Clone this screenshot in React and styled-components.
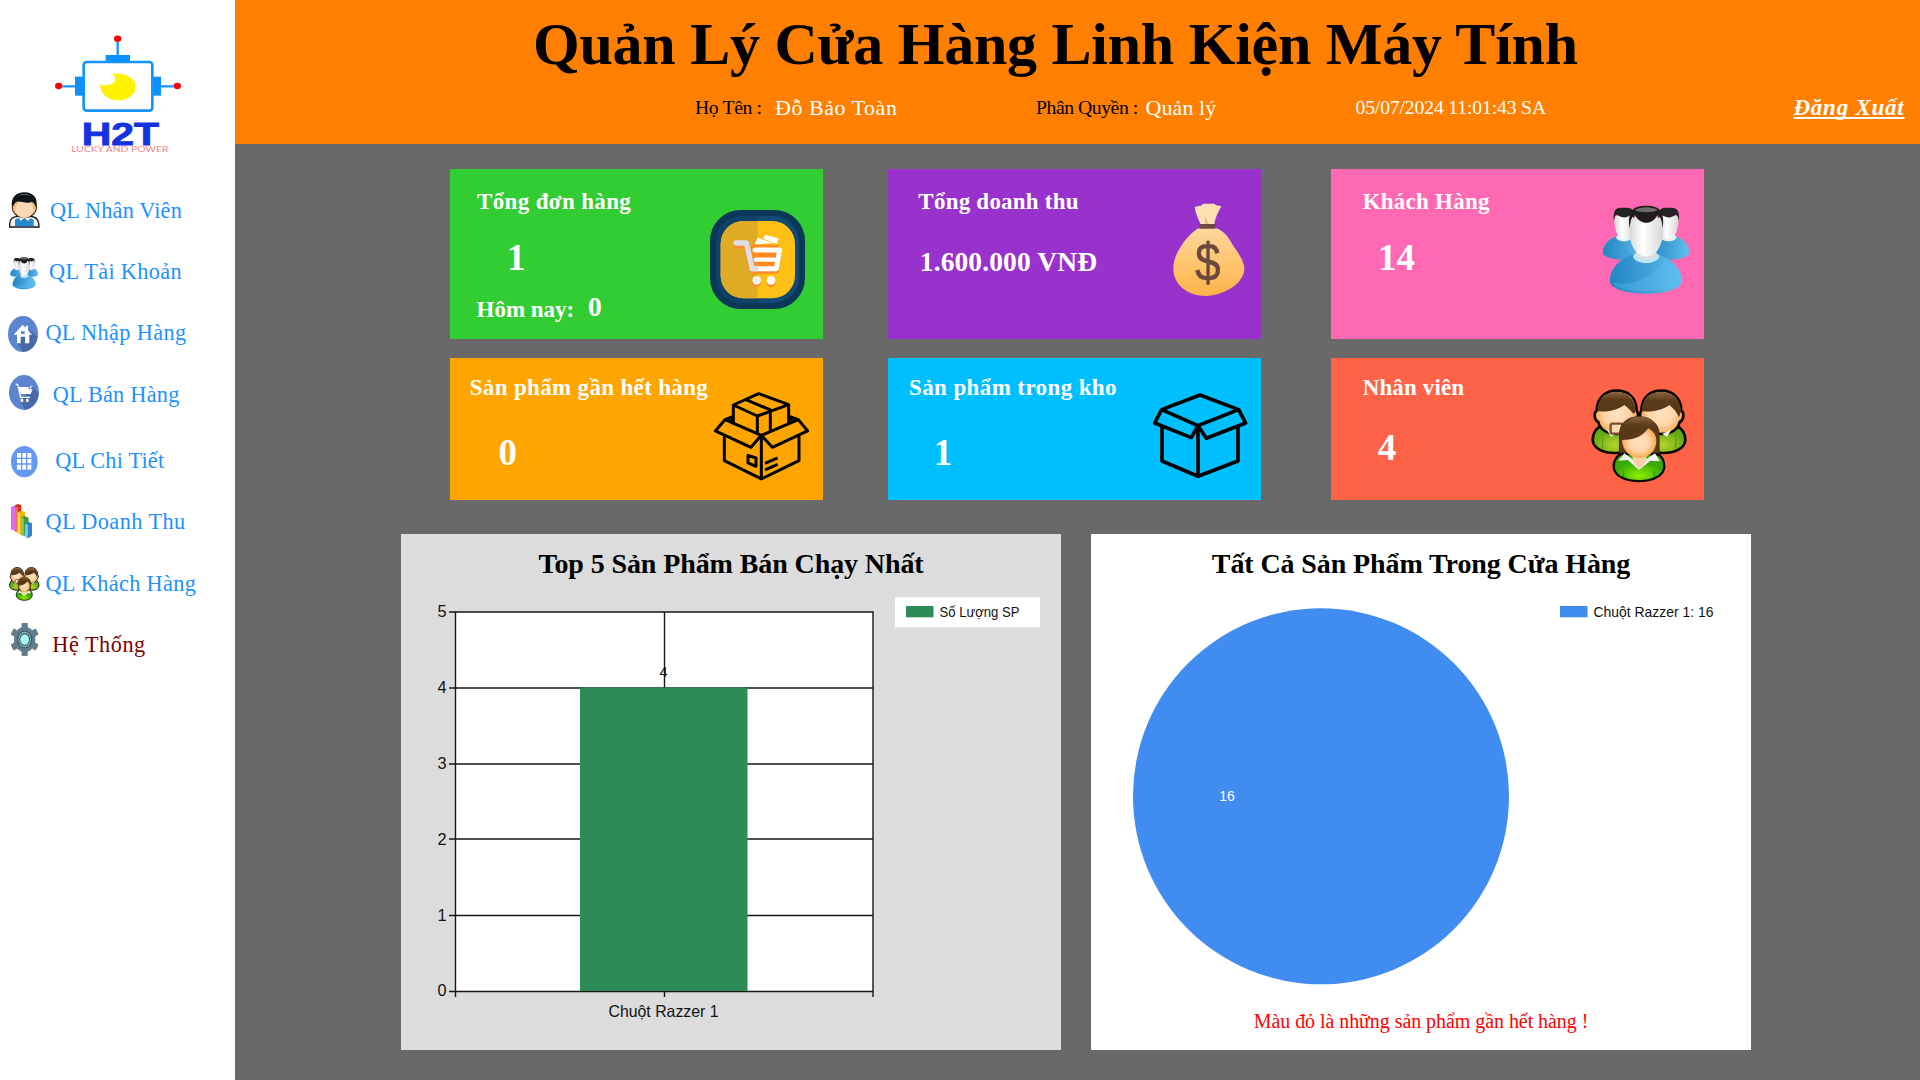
import React from 'react';
import styled, { createGlobalStyle } from 'styled-components';

const GlobalStyle = createGlobalStyle`
  * { box-sizing: border-box; }
  body {
    margin: 0;
    background: #696969;
    font-family: "Liberation Serif", "Times New Roman", serif;
    overflow: hidden;
  }
`;

const Screen = styled.div`
  display: flex;
  width: 1920px;
  height: 1080px;
`;

/* ---------- sidebar ---------- */

const Sidebar = styled.aside`
  width: 235px;
  flex: none;
  background: #fff;
  display: flex;
  flex-direction: column;
`;

const LogoBox = styled.div`
  height: 180px;
  padding: 35px 0 0 54.5px;
`;

const Nav = styled.nav`
  display: flex;
  flex-direction: column;
`;

const NavItem = styled.a`
  display: flex;
  align-items: center;
  height: 61.33px;
  margin-top: ${(p) => p.$gap || 0}px;
  color: ${(p) => p.$color || '#1e90ff'};
  font-size: 22.3px;
  line-height: 28px;
  letter-spacing: ${(p) => p.$spacing}px;
  white-space: nowrap;
`;

const NavIcon = styled.span`
  display: flex;
  flex: none;
  width: ${(p) => p.$width}px;
  padding-left: ${(p) => p.$left}px;
  padding-top: ${(p) => p.$drop || 0}px;
  padding-bottom: ${(p) => p.$lift || 0}px;
`;

/* ---------- header ---------- */

const Main = styled.main`
  flex: 1;
  min-width: 0;
  background: #696969;
`;

const Header = styled.header`
  height: 144px;
  padding-top: 9px;
  background: #ff8000;
`;

const Title = styled.h1`
  margin: 0 0 13px;
  padding-left: 298px;
  font-size: 60px;
  line-height: 71px;
  letter-spacing: -0.25px;
  color: #000;
  white-space: nowrap;
`;

const InfoRow = styled.div`
  display: grid;
  grid-template-columns: 80px 261px 109.5px 210px 438px auto;
  padding-left: 460px;
  line-height: 28px;
  white-space: nowrap;
`;

const InfoLabel = styled.span`
  font-size: 19.7px;
  letter-spacing: ${(p) => p.$spacing}px;
  color: ${(p) => p.$color || '#000'};
`;

const InfoValue = styled.span`
  padding-top: 1px;
  font-size: 22px;
  letter-spacing: ${(p) => p.$spacing}px;
  color: #fff;
`;

const Logout = styled.a`
  padding-top: 1px;
  justify-self: start;
  font-size: 23px;
  font-style: italic;
  font-weight: bold;
  letter-spacing: 0.75px;
  color: #fff;
  text-decoration: underline;
  text-decoration-thickness: 2px;
  text-decoration-skip-ink: none;
  text-underline-offset: 2px;
`;

/* ---------- cards ---------- */

const Cards = styled.section`
  display: grid;
  grid-template-columns: 438.33px 442.67px 373px;
  grid-template-rows: 170px 142px;
  row-gap: 19px;
  padding: 25px 0 0 215px;
`;

const Card = styled.article`
  display: flex;
  justify-content: space-between;
  width: 373px;
  background: ${(p) => p.$color};
  color: #fff;
  font-weight: bold;
  white-space: nowrap;
`;

const CardBody = styled.div`
  display: flex;
  flex-direction: column;
  padding-top: ${(p) => p.$top}px;
`;

const CardTitle = styled.div`
  padding-left: ${(p) => p.$left}px;
  font-size: 23px;
  line-height: 28px;
  letter-spacing: ${(p) => p.$spacing}px;
`;

const CardValue = styled.div`
  margin-top: ${(p) => p.$gap}px;
  padding-left: ${(p) => p.$left}px;
  font-size: ${(p) => (p.$small ? 27.5 : 37)}px;
  line-height: ${(p) => (p.$small ? 30 : 44)}px;
  letter-spacing: ${(p) => (p.$small ? 0.1 : 0)}px;
`;

const CardFoot = styled.div`
  display: flex;
  margin-top: 12px;
`;

const FootLabel = styled.div`
  width: 138px;
  padding: 4px 0 0 26.5px;
  font-size: 23px;
  line-height: 28px;
`;

const FootValue = styled.div`
  font-size: 27.5px;
  line-height: 30px;
`;

const CardArt = styled.div`
  flex: none;
  padding: ${(p) => p.$top}px ${(p) => p.$right}px 0 0;
`;

/* ---------- charts ---------- */

const Charts = styled.section`
  display: flex;
  gap: 30px;
  padding: 34px 0 0 166px;
`;

const Panel = styled.article`
  width: 660px;
  height: 516px;
  padding-top: 13px;
  background: ${(p) => p.$color};
`;

const PanelTitle = styled.h2`
  margin: 0;
  font-size: 28px;
  line-height: 34px;
  letter-spacing: -0.1px;
  text-align: center;
  color: #000;
`;

const Note = styled.p`
  margin: 0;
  font-size: 20px;
  line-height: 28px;
  letter-spacing: -0.06px;
  text-align: center;
  color: #f00;
`;

const Drawing = styled.svg`
  display: block;
  overflow: visible;
`;

const ChartText = styled.text`
  font-family: "Liberation Sans", Arial, sans-serif;
  fill: ${(p) => p.$color || '#111'};
`;

/* ---------- drawings ---------- */

const Art = ({ box, w, h, children }) => (
  <Drawing width={w} height={h} viewBox={box} preserveAspectRatio="none">{children}</Drawing>
);

const Logo = () => (
  <Art box="164 105 378 357" w={126} h={119}>
    <g stroke="#1493ff" strokeWidth="7">
      <path d="M352 120V170M186 259H228M480 259H520" />
    </g>
    <g fill="#0a90ff">
      <rect x="316" y="165" width="73" height="22" />
      <rect x="224" y="230" width="26" height="57" />
      <rect x="456" y="230" width="26" height="57" />
    </g>
    <rect x="250" y="186" width="206" height="146" rx="9" fill="#fff" stroke="#1493ff" strokeWidth="8" />
    <ellipse cx="352" cy="116" rx="11" ry="9.500" fill="#fb0007" />
    <ellipse cx="175" cy="258" rx="11" ry="9.500" fill="#fb0007" />
    <ellipse cx="531" cy="258" rx="11" ry="9.500" fill="#fb0007" />
    <path d="M335 222C370 215 406 232 406 260C406 284 382 301 353 301C324 301 298 282 300 251C310 259 332 256 341 247C348 239 346 229 335 222Z" fill="#fff200" />
    <text x="244" y="435" fontFamily="Liberation Sans" fontWeight="bold" fontSize="94" fill="#1433e0" stroke="#1433e0" strokeWidth="2.5" textLength="232" lengthAdjust="spacingAndGlyphs">H2T</text>
    <text x="213" y="457" fontFamily="Lato" fontSize="25" fill="#f08585" textLength="291" lengthAdjust="spacingAndGlyphs">LUCKY AND POWER</text>
  </Art>
);

const Employee = () => (
  <Art box="26 37 92 107" w={30.7} h={35.7}>
    <path d="M28 142C27 118 36 110 54 110H90C108 110 116 119 116 142Z" fill="#eef3f8" stroke="#151515" strokeWidth="4" />
    <path d="M44 140V121C52 112 92 112 100 121V140Z" fill="#2589cf" />
    <path d="M54 110L60 124L72 116L85 124L91 110L72 100Z" fill="#fff" />
    <ellipse cx="72" cy="84" rx="36" ry="30" fill="#f5b878" stroke="#2a211a" strokeWidth="3" />
    <ellipse cx="72" cy="89" rx="27" ry="26" fill="#fcd9b2" />
    <path d="M35 84C30 52 48 38 72 38C98 38 114 54 108 84C103 74 102 70 94 66C80 74 60 64 50 66C42 70 40 76 35 84Z" fill="#111417" />
    <path d="M52 48C62 41 84 41 93 49C80 46 64 45 52 48Z" fill="#5b6166" />
  </Art>
);

const Customers = ({ w, h }) => (
  <Art box="846 133 266 269" w={w} h={h}>
    <defs>
      <linearGradient id="shirt" x1="0" x2="1">
        <stop offset="0" stopColor="#1f86c4" />
        <stop offset="0.5" stopColor="#429fd6" />
        <stop offset="1" stopColor="#63c0f2" />
      </linearGradient>
      <linearGradient id="face" x1="0" x2="1">
        <stop offset="0" stopColor="#d6d6d6" />
        <stop offset="0.4" stopColor="#ffffff" />
        <stop offset="1" stopColor="#d6d6d6" />
      </linearGradient>
    </defs>
    {[0, 134].map((dx) => (
      <g key={dx} transform={`translate(${dx})`}>
        <path
          d="M848 277C850 244 878 224 912 224C947 224 974 248 975 277C968 304 856 304 848 277Z"
          fill="url(#shirt)"
        />
        <path d="M888 230C892 246 932 246 936 230L928 220H896Z" fill="#e6eef2" />
        <path d="M883 165C880 210 897 236 912 236C928 236 944 208 941 165Z" fill="url(#face)" />
        <path d="M882 182C876 135 900 142 912 141C925 142 948 136 942 182C941 168 936 160 931 163C920 173 904 172 893 163C887 160 884 168 882 182Z" fill="#242222" />
      </g>
    ))}
    <path d="M869 360C872 310 920 276 978 276C1036 276 1084 314 1086 360C1084 412 872 412 869 360Z" fill="url(#shirt)" />
    <path d="M880 366C930 380 1000 350 1034 297C1064 312 1080 336 1081 362C1068 402 886 400 880 366Z" fill="#5dbcf0" opacity="0.35" />
    <path d="M939 286C942 314 1014 314 1019 286L1004 272H952Z" fill="#bfe4f4" />
    <path d="M948 270C944 303 1012 304 1009 270Z" fill="#dedede" />
    <path d="M929 180C922 242 942 287 978 287C1015 287 1036 240 1028 180C1015 160 940 160 929 180Z" fill="url(#face)" />
    <path d="M929 203C921 148 942 135 978 135C1015 135 1036 148 1028 203C1026 176 1018 160 1010 166C998 193 960 193 947 166C939 160 931 176 929 203Z" fill="#1f1c1c" />
    <path d="M944 148C962 137 996 137 1013 148C1000 157 958 157 944 148Z" fill="#6e6a68" />
  </Art>
);

const Staff = ({ w, h }) => (
  <Art box="812 685 288 282" w={w} h={h}>
    <defs>
      <radialGradient id="skin">
        <stop offset="0" stopColor="#fee3c4" />
        <stop offset="0.6" stopColor="#fdd5a8" />
        <stop offset="1" stopColor="#f9a850" />
      </radialGradient>
      <radialGradient id="green" cy="0.7">
        <stop offset="0" stopColor="#b8d42c" />
        <stop offset="1" stopColor="#64a814" />
      </radialGradient>
      <radialGradient id="lime" cy="0.8">
        <stop offset="0" stopColor="#8cf000" />
        <stop offset="1" stopColor="#38a808" />
      </radialGradient>
      <linearGradient id="hair" x2="0" y2="1">
        <stop offset="0" stopColor="#8a6440" />
        <stop offset="0.35" stopColor="#5c3b1a" />
        <stop offset="1" stopColor="#573616" />
      </linearGradient>
    </defs>
    {['', 'translate(1912) scale(-1 1)'].map((flip) => (
      <g key={flip} transform={flip} stroke="#0a0a05" strokeWidth="8">
        <path d="M817 838C818 810 834 797 850 795H924C944 799 950 818 950 838C949 888 820 892 817 838Z" fill="url(#green)" />
        <path d="M829 750C819 756 822 780 834 784C838 806 860 820 888 820C918 820 940 800 944 784C956 776 954 756 949 750C948 708 922 690 888 690C854 690 830 712 829 750Z" fill="url(#skin)" />
      </g>
    ))}
    <path d="M832 752C830 714 856 694 888 694C922 694 944 714 946 752L940 760C932 752 926 744 912 733C888 750 860 754 832 752Z" fill="url(#hair)" />
    <path d="M965 752C964 714 990 694 1023 694C1056 694 1080 714 1082 752L1076 770C1070 754 1060 744 1047 733C1024 750 994 754 965 752Z" fill="url(#hair)" />
    <path d="M858 806L872 828L886 820ZM1054 806L1040 828L1026 820Z" fill="#f4f4f4" />
    <path d="M847 828V866M1066 828V866" stroke="#5c9614" strokeWidth="3" />
    <rect x="871" y="789" width="36" height="30" rx="5" fill="#f9dcae" stroke="#7c4b30" strokeWidth="7" />
    <path d="M898 884V820C898 786 924 768 956 768C990 768 1016 790 1016 820V884C1004 890 914 890 898 884Z" fill="#5c3c18" stroke="#3a2810" strokeWidth="3" />
    <path d="M880 918C880 896 892 882 906 880H1006C1022 882 1032 896 1032 918C1030 976 882 976 880 918Z" fill="url(#lime)" stroke="#0a0a05" strokeWidth="7" />
    <path d="M910 930V950M1002 930V950" stroke="#2f9808" strokeWidth="4" />
    <path d="M894 900L912 878L956 910L1004 878L1019 902L990 900L956 928L922 898Z" fill="#f2f2f2" />
    <path d="M936 880H978V903L956 926L938 903Z" fill="#fbd0a2" />
    <path d="M905 836C905 806 930 796 956 796C984 796 1008 808 1008 840C1008 872 984 892 956 892C928 892 905 868 905 836Z" fill="url(#skin)" />
    <path d="M903 838C898 790 926 768 956 768C994 768 1014 790 1012 842C1006 822 1000 812 984 803C962 832 936 838 903 838Z" fill="url(#hair)" />
  </Art>
);

const OrdersArt = () => (
  <Art box="810 150 285 297" w={95} h={99}>
    <rect x="810" y="150" width="285" height="297" rx="92" fill="#0b3858" />
    <rect x="828" y="168" width="249" height="261" rx="78" fill="#114b74" />
    <path d="M953 168H906A78 78 0 0 0 828 246V351A78 78 0 0 0 906 429H953Z" fill="#0f4268" />
    <rect x="842" y="183" width="223" height="232" rx="68" fill="#ffc015" />
    <path d="M953 183H910A68 68 0 0 0 842 251V347A68 68 0 0 0 910 415H953Z" fill="#dfab24" />
    <path d="M940 254H1016L1006 330H936L932 262Z" fill="#ff8a1f" />
    <g fill="none" stroke="#fb8b28" strokeWidth="16" strokeLinecap="round" strokeLinejoin="round">
      <path d="M888 257H918L936 333H1008L1018 280" />
    </g>
    <circle cx="950" cy="368" r="13" fill="#fb8b28" />
    <circle cx="993" cy="368" r="13" fill="#fb8b28" />
    <path d="M944 252L953 233L1000 250ZM970 236L975 224L1016 235L1010 252Z" fill="#fff" />
    <g fill="none" stroke="#fff" strokeLinecap="round" strokeLinejoin="round">
      <path d="M945 270H1019L1009 326H936" strokeWidth="15" />
      <path d="M948 299H1003" strokeWidth="13" />
      <path d="M888 249H919L937 326H948" strokeWidth="16" stroke="#dedee4" />
    </g>
    <circle cx="950" cy="361" r="13" fill="#f2f2f4" />
    <circle cx="993" cy="361" r="13" fill="#fff" />
  </Art>
);

const BagArt = () => (
  <Art box="880 129 215 280" w={71.7} h={93.3}>
    <defs>
      <linearGradient id="bag" x2="0" y2="1">
        <stop offset="0" stopColor="#ffd79c" />
        <stop offset="1" stopColor="#ffb347" />
      </linearGradient>
    </defs>
    <path d="M958 204C930 218 881 275 881 325C881 380 930 408 978 408C1035 406 1094 370 1094 325C1094 300 1065 265 1050 240C1040 222 1025 210 1008 204Z" fill="url(#bag)" />
    <path d="M945 142C955 134 966 141 970 131H1005C1008 139 1016 134 1025 139C1013 160 1006 176 1004 193H963C955 175 947 160 945 142Z" fill="#ffe0b2" />
    <path d="M974 164L988 192H978Z" fill="#e3bd88" />
    <rect x="958" y="192" width="50" height="14" rx="3" fill="#6d4c41" />
    <text x="946" y="363" fontFamily="Liberation Sans" fontWeight="normal" fontSize="160" fill="#6a483c" stroke="#6a483c" strokeWidth="1.500" textLength="77" lengthAdjust="spacingAndGlyphs">$</text>
  </Art>
);

const PackedBoxArt = () => (
  <Art box="822 695 285 265" w={95} h={88.3}>
    <g fill="none" stroke="#000" strokeWidth="9" strokeLinejoin="round">
      <path d="M880 792V734L956 700L1046 733V792M880 734L952 767L1046 733M916 717L991 749V812M952 767V819" />
      <path d="M880 768L855 778L826 812L933 861L964 825L855 778M1048 768L1075 778L1103 812L997 861L964 825L1075 778" />
      <path d="M868 782L880 776M1060 782L1046 774" strokeWidth="7" />
      <path d="M853 826V901L964 956L1077 901V826M964 825V956" />
      <path d="M924 885L948 893V918L924 908ZM975 909L1013 893M975 929L1013 912" />
    </g>
  </Art>
);

const OpenBoxArt = () => (
  <Art box="820 700 283 256" w={94.3} h={85.3}>
    <g fill="none" stroke="#000" strokeWidth="11" strokeLinejoin="round">
      <path d="M846 750L961 706L1077 750L955 798Z" />
      <path d="M846 750L825 790L935 834L955 798L980 836L1098 790L1077 750" />
      <path d="M847 800V904L955 950L1075 904V800M955 798V950" />
    </g>
  </Art>
);

const ImportIcon = () => (
  <Art box="24 408 90 108" w={30} h={36}>
    <ellipse cx="69" cy="462" rx="45" ry="54" fill="#5c84d0" />
    <path d="M68 434L113 470C108 496 92 512 70 515L52 490Z" fill="#4a68a6" />
    <path d="M41 464L68 434L76 443V437H84V451L96 464H88V490H75V470H62V490H51V464Z" fill="#fff" />
    <rect x="63" y="454" width="11" height="8" fill="#5c84d0" />
  </Art>
);

const SaleIcon = () => (
  <Art box="27 585 90 105" w={30} h={35}>
    <ellipse cx="72" cy="637.500" rx="45" ry="52.500" fill="#5c84d0" />
    <path d="M98 622L116 640C113 664 96 686 76 689L60 664Z" fill="#4a68a6" />
    <path d="M56 621H86V628H98L92 642H62Z" fill="#fff" />
    <path d="M47 612L53 614L62 652H90" fill="none" stroke="#fff" strokeWidth="4" />
    <path d="M97 618C90 620 88 628 94 633" fill="none" stroke="#dbe4f6" strokeWidth="4" />
    <rect x="62" y="656" width="8" height="10" rx="3" fill="#fff" />
    <rect x="78" y="656" width="8" height="10" rx="3" fill="#fff" />
  </Art>
);

const DetailIcon = () => (
  <Art box="33 78 80 94" w={26.7} h={31.3}>
    <ellipse cx="73" cy="125" rx="40" ry="47" fill="#6399f3" />
    <rect x="51" y="99" width="43" height="50" fill="#fff" />
    <path d="M65 99V149M80 99V149M51 115H94M51 132H94" stroke="#6399f3" strokeWidth="4" />
  </Art>
);

const RevenueIcon = () => (
  <Art box="33 249 67 103" w={22.3} h={34.3}>
    <path d="M33 258L47 253V330L33 326Z" fill="#e26af0" />
    <path d="M45 253L53 249L64 252V330L45 332Z" fill="#d4331f" />
    <path d="M45 257L53 258V335L45 330Z" fill="#f2705a" />
    <path d="M53 274L64 269L75 273V342L53 338Z" fill="#f0b400" />
    <path d="M53 274L60 276V341L53 337Z" fill="#ffe24a" />
    <path d="M64 290L74 285L86 290V346L64 343Z" fill="#3d9c3a" />
    <path d="M64 290L71 293V345L64 341Z" fill="#8ed36a" />
    <path d="M75 308L84 302L96 306V344L84 352L75 347Z" fill="#2d84c6" />
    <path d="M75 308L84 311V352L75 347Z" fill="#7fc4ee" />
  </Art>
);

const SystemIcon = () => (
  <Art box="32 608 81 99" w={27} h={33}>
    <g fill="#607d8b">
      {[0, 60, 120].map((a) => (
        <rect key={a} x="63" y="611" width="20" height="93" rx="3" transform={`translate(73 657.5) scale(0.93 1.06) rotate(${a}) translate(-73 -657.5)`} />
      ))}
      <ellipse cx="73" cy="657.500" rx="32" ry="38" />
    </g>
    <ellipse cx="73" cy="657.500" rx="23" ry="27" fill="#455a64" />
    <ellipse cx="73" cy="657.500" rx="19" ry="23" fill="#84b9bc" />
    <ellipse cx="73" cy="657.500" rx="16" ry="19" fill="#37525c" />
    <ellipse cx="73" cy="657.500" rx="13" ry="16" fill="#a7fbee" />
  </Art>
);

/* ---------- charts ---------- */

const yAxis = [
  [5, 612, 617.3],
  [4, 688, 693.3],
  [3, 764, 769],
  [2, 839, 845],
  [1, 915.5, 921],
  [0, 991.5, 996],
];

const BarChart = () => (
  <Drawing width="660" height="469" viewBox="401 581 660 469">
    <rect x="455.500" y="612" width="417.500" height="379.500" fill="#fff" />
    <g stroke="#161616" strokeWidth="1.4">
      {yAxis.map(([n, y]) => <path key={n} d={`M449 ${y}H873`} />)}
      <path d="M455.500 611.300V997M873 611.300V997M664.500 612V688M664.500 991V997" />
    </g>
    <rect x="580" y="687.500" width="167.500" height="303.500" fill="#2e8b57" />
    {yAxis.map(([n, , base]) => (
      <ChartText key={n} x="446.500" y={base} fontSize="16.3" textAnchor="end">{n}</ChartText>
    ))}
    <ChartText x="663.500" y="677.300" fontSize="14.5" textAnchor="middle">4</ChartText>
    <ChartText x="608.500" y="1017.300" fontSize="16.5" textLength="110" lengthAdjust="spacingAndGlyphs">Chuột Razzer 1</ChartText>
    <rect x="895" y="597.300" width="145" height="30" fill="#fff" />
    <rect x="906" y="606" width="27.500" height="11.300" fill="#2e8b57" />
    <ChartText x="939.500" y="617.300" fontSize="15" textLength="80" lengthAdjust="spacingAndGlyphs">Số Lượng SP</ChartText>
  </Drawing>
);

const PieChart = () => (
  <Drawing width="660" height="426" viewBox="1091 581 660 426">
    <circle cx="1321" cy="796.300" r="188" fill="#418cf0" />
    <ChartText x="1227" y="801.300" fontSize="15" textLength="15.5" lengthAdjust="spacingAndGlyphs" textAnchor="middle" $color="#fff">16</ChartText>
    <rect x="1560" y="606" width="27.500" height="11.300" fill="#418cf0" />
    <ChartText x="1593.500" y="617.300" fontSize="15" textLength="120" lengthAdjust="spacingAndGlyphs">Chuột Razzer 1: 16</ChartText>
  </Drawing>
);

/* ---------- page ---------- */

const menu = [
  { text: 'QL Nhân Viên', icon: <Employee />, left: 8.5, width: 50, spacing: 0.17, lift: 1 },
  { text: 'QL Tài Khoản', icon: <Customers w={28.5} h={32.5} />, left: 9.7, width: 49, spacing: 0.36, drop: 2 },
  { text: 'QL Nhập Hàng', icon: <ImportIcon />, left: 8, width: 45.4, spacing: 0.38, drop: 2 },
  { text: 'QL Bán Hàng', icon: <SaleIcon />, left: 9, width: 52.7, spacing: 0.24, lift: 4 },
  { text: 'QL Chi Tiết', icon: <DetailIcon />, left: 11, width: 55.2, spacing: 0.2, gap: 5, drop: 2 },
  { text: 'QL Doanh Thu', icon: <RevenueIcon />, left: 11, width: 45.4, spacing: 0.44, lift: 3 },
  { text: 'QL Khách Hàng', icon: <Staff w={30.5} h={34} />, left: 9, width: 45.4, spacing: 0.33 },
  { text: 'Hệ Thống', icon: <SystemIcon />, left: 10.7, width: 52.3, spacing: 0.5, lift: 11, color: '#800000' },
];

export default function App() {
  return (
    <Screen>
      <GlobalStyle />
      <Sidebar>
        <LogoBox><Logo /></LogoBox>
        <Nav>
          {menu.map((m) => (
            <NavItem key={m.text} $gap={m.gap} $color={m.color} $spacing={m.spacing}>
              <NavIcon $width={m.width} $left={m.left} $lift={m.lift} $drop={m.drop}>{m.icon}</NavIcon>
              {m.text}
            </NavItem>
          ))}
        </Nav>
      </Sidebar>
      <Main>
        <Header>
          <Title>Quản Lý Cửa Hàng Linh Kiện Máy Tính</Title>
          <InfoRow>
            <InfoLabel $spacing={-0.38}>Họ Tên :</InfoLabel>
            <InfoValue $spacing={0.53}>Đỗ Bảo Toàn</InfoValue>
            <InfoLabel $spacing={-0.45}>Phân Quyền :</InfoLabel>
            <InfoValue $spacing={0.08}>Quản lý</InfoValue>
            <InfoLabel $spacing={-0.16} $color="#fff">05/07/2024 11:01:43 SA</InfoLabel>
            <Logout>Đăng Xuất</Logout>
          </InfoRow>
        </Header>
        <Cards>
          <Card $color="#32cd32">
            <CardBody $top={19}>
              <CardTitle $left={27} $spacing={0.36}>Tổng đơn hàng</CardTitle>
              <CardValue $gap={20} $left={57}>1</CardValue>
              <CardFoot>
                <FootLabel>Hôm nay:</FootLabel>
                <FootValue>0</FootValue>
              </CardFoot>
            </CardBody>
            <CardArt $top={41} $right={18}><OrdersArt /></CardArt>
          </Card>
          <Card $color="#9932cc">
            <CardBody $top={19}>
              <CardTitle $left={30} $spacing={0.23}>Tổng doanh thu</CardTitle>
              <CardValue $small $gap={31} $left={31.5}>1.600.000 VNĐ</CardValue>
            </CardBody>
            <CardArt $top={34.3} $right={16.5}><BagArt /></CardArt>
          </Card>
          <Card $color="#ff69b4">
            <CardBody $top={19}>
              <CardTitle $left={31.7} $spacing={0.24}>Khách Hàng</CardTitle>
              <CardValue $gap={20} $left={47}>14</CardValue>
            </CardBody>
            <CardArt $top={35.5} $right={13.7}><Customers w={88.7} h={89.7} /></CardArt>
          </Card>
          <Card $color="#ffa500">
            <CardBody $top={16}>
              <CardTitle $left={19.7} $spacing={0.34}>Sản phẩm gần hết hàng</CardTitle>
              <CardValue $gap={29} $left={48.5}>0</CardValue>
            </CardBody>
            <CardArt $top={33.7} $right={14}><PackedBoxArt /></CardArt>
          </Card>
          <Card $color="#00bfff">
            <CardBody $top={16}>
              <CardTitle $left={20.7} $spacing={0.39}>Sản phẩm trong kho</CardTitle>
              <CardValue $gap={29} $left={45.5}>1</CardValue>
            </CardBody>
            <CardArt $top={35.3} $right={13.6}><OpenBoxArt /></CardArt>
          </Card>
          <Card $color="#ff6347">
            <CardBody $top={16}>
              <CardTitle $left={31.7} $spacing={0.13}>Nhân viên</CardTitle>
              <CardValue $gap={24} $left={46.7}>4</CardValue>
            </CardBody>
            <CardArt $top={30.5} $right={17}><Staff w={96} h={94} /></CardArt>
          </Card>
        </Cards>
        <Charts>
          <Panel $color="#dcdcdc">
            <PanelTitle>Top 5 Sản Phẩm Bán Chạy Nhất</PanelTitle>
            <BarChart />
          </Panel>
          <Panel $color="#fff">
            <PanelTitle>Tất Cả Sản Phẩm Trong Cửa Hàng</PanelTitle>
            <PieChart />
            <Note>Màu đỏ là những sản phẩm gần hết hàng !</Note>
          </Panel>
        </Charts>
      </Main>
    </Screen>
  );
}
